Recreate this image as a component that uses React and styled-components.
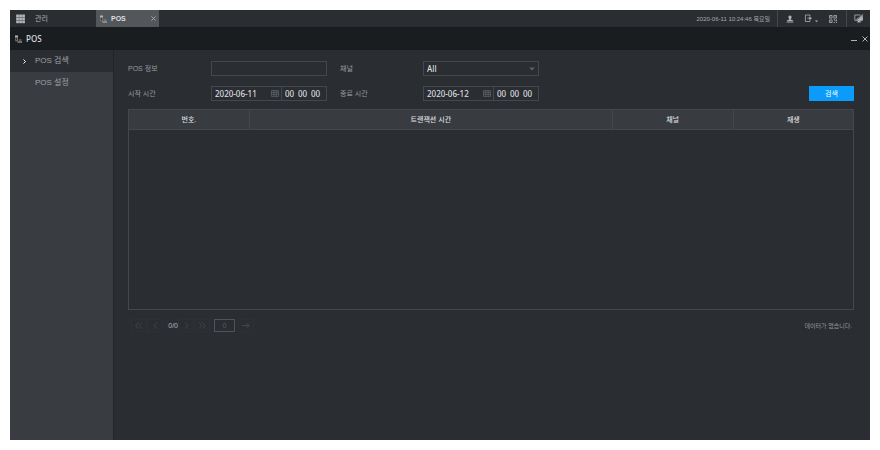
import { useState } from "react";
import styled, { createGlobalStyle } from "styled-components";

const colors = {
  bar: "#2a2e32",
  tab: "#53565b",
  title: "#1a1d1f",
  sidebar: "#393c40",
  content: "#2a2d31",
  border: "#44484c",
  header: "#383b3f",
  text: "#9a9c9e",
  light: "#dedfe0",
  faint: "#43474b",
  accent: "#0a9bfb",
};

const fonts = {
  body: `"Liberation Sans", "Noto Sans CJK KR", sans-serif`,
  field: `"Noto Sans", "Noto Sans CJK KR", sans-serif`,
};

const GlobalStyle = createGlobalStyle`
  * {
    box-sizing: border-box;
  }

  body {
    margin: 0;
    background-color: #ffffff;
    color: ${colors.text};
    font-family: ${fonts.body};
    font-size: 7px;
    line-height: 10px;
  }

  button,
  input,
  select {
    margin: 0;
    padding: 0;
    border: 0;
    background: none;
    color: inherit;
    font: inherit;
  }

  svg {
    display: block;
  }
`;

const Screen = styled.div`
  min-height: calc(100vh - 20px);
  margin: 10px;
  display: flex;
  flex-direction: column;
  background-color: ${colors.content};
`;

const TopBar = styled.header`
  height: 17px;
  display: flex;
  align-items: stretch;
  background-color: ${colors.bar};
`;

const MenuButton = styled.button`
  width: 86px;
  padding-left: 6px;
  display: flex;
  align-items: center;
  gap: 9px;
  color: #b4b6b8;
`;

const Tab = styled.div`
  width: 63px;
  padding: 0 3px 0 4px;
  display: flex;
  align-items: center;
  background-color: ${colors.tab};
  color: ${colors.light};
  font-weight: 600;
`;

const TabName = styled.span`
  flex: 1;
  padding-left: 4px;
`;

const IconButton = styled.button`
  width: ${({ $width }) => $width || 10}px;
  display: flex;
  align-items: center;
  justify-content: center;
  color: #b0b2b4;
`;

const Clock = styled.time`
  margin-left: auto;
  padding-right: 7px;
  align-self: center;
  color: #a8aaac;
  font-size: 6px;
`;

const Tools = styled.div`
  padding: 0 6px;
  display: flex;
  gap: 8px;
  border-left: 1px solid ${colors.border};
`;

const TitleBar = styled.div`
  height: 23px;
  padding: 0 2px 0 5px;
  display: flex;
  align-items: center;
  gap: 4px;
  background-color: ${colors.title};
`;

const Title = styled.h1`
  flex: 1;
  margin: 0;
  color: ${colors.light};
  font-family: ${fonts.field};
  font-size: 8px;
  font-weight: 500;
`;

const Body = styled.div`
  flex: 1;
  display: flex;
`;

const Sidebar = styled.nav`
  width: 104px;
  flex: none;
  background-color: ${colors.sidebar};
  border-right: 1px solid #222528;
`;

const SidebarItem = styled.button`
  width: 100%;
  height: 22px;
  padding-left: 12px;
  display: flex;
  align-items: center;
  background-color: ${({ $active }) => ($active ? colors.content : "transparent")};
  color: #a0a2a4;
  font-size: 8px;
`;

const Marker = styled.span`
  width: 13px;
  color: #ffffff;
`;

const Content = styled.main`
  flex: 1;
  min-width: 0;
  padding: 11px 16px 0 14px;
`;

const Search = styled.form`
  margin-bottom: 8px;
  display: flex;
  flex-direction: column;
  gap: 10px;
`;

const SearchRow = styled.div`
  display: flex;
  align-items: center;
  gap: 13px;
`;

const Field = styled.div`
  display: flex;
  align-items: center;
`;

const Label = styled.label`
  width: 83px;
`;

const Control = styled.div`
  width: 116px;
  height: 15px;
  display: flex;
  align-items: center;
  border: 1px solid ${colors.border};
  color: ${colors.light};
  font-family: ${fonts.field};
  font-size: 8px;
  font-weight: 500;
`;

const TextInput = styled.input`
  width: 100%;
  padding: 0 3px;
`;

const Select = styled.select`
  flex: 1;
  padding-left: 3px;
  appearance: none;
`;

const Arrow = styled.span`
  padding-right: 3px;
  color: #5d6063;
`;

const DateInput = styled.input`
  width: 59px;
  padding-left: 3px;
`;

const TimeGroup = styled.div`
  height: 100%;
  margin-left: 2px;
  padding-left: 3px;
  flex: 1;
  display: flex;
  align-items: center;
  border-left: 1px solid ${colors.border};
`;

const TimeInput = styled.input`
  width: 13px;
  min-width: 0;
`;

const SearchButton = styled.button`
  width: 45px;
  height: 15px;
  margin-left: auto;
  background-color: ${colors.accent};
  color: #ffffff;
`;

const Table = styled.table`
  width: 100%;
  table-layout: fixed;
  border-collapse: collapse;
  border: 1px solid ${colors.border};
`;

const HeadCell = styled.th`
  width: ${({ $width }) => $width};
  height: 20px;
  padding: 0;
  border: 1px solid ${colors.border};
  background-color: ${colors.header};
  color: ${colors.light};
  font-weight: 500;
`;

const EmptyCell = styled.td`
  height: 180px;
  padding: 0;
`;

const Footer = styled.div`
  margin-top: 9px;
  padding: 0 2px 0 3px;
  display: flex;
  align-items: center;
`;

const PageButton = styled.button`
  width: 16px;
  height: 13px;
  display: flex;
  align-items: center;
  justify-content: center;
  border: 1px solid #2d3034;
  color: ${colors.faint};
`;

const PageCount = styled.span`
  width: 15px;
  text-align: right;
  color: #b4b6b8;
`;

const PageInput = styled.input`
  width: 21px;
  height: 13px;
  margin: 0 3px 0 4px;
  border: 1px solid #505458;
  color: #5a5d60;
  text-align: center;
`;

const Message = styled.span`
  margin-left: auto;
  font-size: 6px;
`;

const GridIcon = () => (
  <svg width="10" height="10" viewBox="0 0 10 10" fill="currentColor">
    {[0, 3, 6].map((y) => [0, 3, 6].map((x) => <rect key={`${x}-${y}`} x={x + 0.2} y={y + 0.5} width="2.7" height="2.7" />))}
  </svg>
);

const PosIcon = () => (
  <svg width="7" height="8" viewBox="0 0 7 8">
    <path d="M0 .5h3v2H0z" fill="#b5b7b2" />
    <path d="M.3 2.5h2.6v3.8H.3z" fill="#777b76" />
    <path d="M1 3.2h1v2H1z" fill="#2a2d2b" />
    <path d="M3.8 4.5h2.7v1H3.8z" fill="#878c85" />
    <path d="M2.6 6.5H7v1H2.6z" fill="#c0c2bd" />
  </svg>
);

const CloseIcon = ({ size = 5 }) => (
  <svg width={size} height={size} viewBox="0 0 6 6" fill="none" stroke="currentColor">
    <path d="M0.5 0.5l5 5M5.5 0.5l-5 5" />
  </svg>
);

const UserIcon = () => (
  <svg width="8" height="8" viewBox="0 0 8 8" fill="currentColor">
    <path d="M4 0.5a1.6 1.6 0 0 1 1.6 1.7c0 .8-.4 1.5-.9 1.9v.5l2.4.9v.8H.9v-.8l2.4-.9v-.5c-.5-.4-.9-1.1-.9-1.9A1.6 1.6 0 0 1 4 .5zM.6 6.8h6.8v.8H.6z" />
  </svg>
);

const ExitIcon = () => (
  <svg width="14" height="9" viewBox="0 0 14 9" fill="none" stroke="currentColor" strokeWidth="0.8">
    <path d="M6 2.2V1H1.4v6.5H6V6.3M3.4 4.2h3" />
    <path d="M5.4 2.2l2.5 2-2.5 2z" fill="currentColor" stroke="none" />
    <path d="M11 6.4h3l-1.5 1.8z" fill="currentColor" stroke="none" />
  </svg>
);

const QrIcon = () => (
  <svg width="8" height="8" viewBox="0 0 8 8" fill="none" stroke="currentColor" strokeWidth="0.8">
    <path d="M.5 .5h2.6v2.6H.5zM4.9 .5h2.6v2.6H4.9zM.5 4.9h2.6v2.6H.5zM4.6 4.6h1.2v1.2M7.5 4.3v1.8H6.3M4.6 7.5h1.2M7.5 7v1" />
    <path d="M1.4 1.8h.8M5.8 1.8h.8M1.4 6.2h.8" />
  </svg>
);

const ScreenIcon = () => (
  <svg width="10" height="9" viewBox="0 0 10 9">
    <path d="M6.5 1H.8v5.4h7.6V4M3 8h4.2" fill="none" stroke="currentColor" strokeWidth="0.8" />
    <path d="M2.6 6.2L8.8 1v5.2zM4 6.4h2.2V8H4z" fill="currentColor" />
    <path d="M2.2 5.6L9.2 .3" stroke="currentColor" strokeWidth="0.7" />
  </svg>
);

const CalendarIcon = () => (
  <svg width="8" height="7" viewBox="0 0 8 7" fill="none" stroke="#66696c" strokeWidth="0.7">
    <path d="M.5 .6h7v5.8h-7zM.5 2.3h7M.5 4.3h7M2.8 .6v5.8M5.2 .6v5.8" />
  </svg>
);

const LineIcon = ({ width, d }) => (
  <svg width={width} height="7" viewBox={`0 0 ${width} 7`} fill="none" stroke="currentColor">
    <path d={d} />
  </svg>
);

const menu = ["POS 검색", "POS 설정"];

const columns = [
  { name: "번호.", width: "16.7%" },
  { name: "트랜잭션 시간", width: "50%" },
  { name: "채널", width: "16.7%" },
  { name: "재생", width: "16.6%" },
];

const DateTime = ({ id, label, date }) => (
  <Field>
    <Label htmlFor={id}>{label}</Label>
    <Control>
      <DateInput id={id} defaultValue={date} />
      <CalendarIcon />
      <TimeGroup>
        {["시", "분", "초"].map((unit) => (
          <TimeInput key={unit} aria-label={`${label} ${unit}`} defaultValue="00" />
        ))}
      </TimeGroup>
    </Control>
  </Field>
);

const App = () => {
  const [active, setActive] = useState(0);

  return (
    <>
      <GlobalStyle />

      <Screen>
        <TopBar>
          <MenuButton>
            <GridIcon />
            관리
          </MenuButton>
          <Tab>
            <PosIcon />
            <TabName>POS</TabName>
            <IconButton $width={6} aria-label="탭 닫기">
              <CloseIcon />
            </IconButton>
          </Tab>
          <Clock>2020-06-11 10:24:46 목요일</Clock>
          <Tools>
            <IconButton $width={12} aria-label="사용자">
              <UserIcon />
            </IconButton>
            <IconButton $width={14} aria-label="로그아웃">
              <ExitIcon />
            </IconButton>
            <IconButton $width={14} aria-label="QR 코드">
              <QrIcon />
            </IconButton>
          </Tools>
          <Tools>
            <IconButton $width={11} aria-label="화면">
              <ScreenIcon />
            </IconButton>
          </Tools>
        </TopBar>

        <TitleBar>
          <PosIcon />
          <Title>POS</Title>
          <IconButton $width={6} aria-label="최소화">
            <LineIcon width={6} d="M0 5.5h6" />
          </IconButton>
          <IconButton $width={7} aria-label="닫기">
            <CloseIcon size={6} />
          </IconButton>
        </TitleBar>

        <Body>
          <Sidebar>
            {menu.map((item, index) => (
              <SidebarItem key={item} $active={index === active} onClick={() => setActive(index)}>
                <Marker>{index === active && <LineIcon width={5} d="M1.5 1.5l2 2-2 2" />}</Marker>
                {item}
              </SidebarItem>
            ))}
          </Sidebar>

          <Content>
            <Search onSubmit={(event) => event.preventDefault()}>
              <SearchRow>
                <Field>
                  <Label htmlFor="info">POS 정보</Label>
                  <Control>
                    <TextInput id="info" />
                  </Control>
                </Field>
                <Field>
                  <Label htmlFor="channel">채널</Label>
                  <Control>
                    <Select id="channel">
                      <option>All</option>
                    </Select>
                    <Arrow>
                      <svg width="6" height="4" viewBox="0 0 6 4" fill="currentColor">
                        <path d="M0 .5h6L3 3.5z" />
                      </svg>
                    </Arrow>
                  </Control>
                </Field>
              </SearchRow>
              <SearchRow>
                <DateTime id="start" label="시작 시간" date="2020-06-11" />
                <DateTime id="end" label="종료 시간" date="2020-06-12" />
                <SearchButton type="submit">검색</SearchButton>
              </SearchRow>
            </Search>

            <Table>
              <thead>
                <tr>
                  {columns.map((column) => (
                    <HeadCell key={column.name} $width={column.width}>
                      {column.name}
                    </HeadCell>
                  ))}
                </tr>
              </thead>
              <tbody>
                <tr>
                  <EmptyCell colSpan={columns.length} />
                </tr>
              </tbody>
            </Table>

            <Footer>
              <PageButton aria-label="처음">
                <LineIcon width={8} d="M3.5 .5l-3 3 3 3M7 .5l-3 3 3 3" />
              </PageButton>
              <PageButton aria-label="이전">
                <LineIcon width={5} d="M4 .5l-3 3 3 3" />
              </PageButton>
              <PageCount>0/0</PageCount>
              <PageButton aria-label="다음">
                <LineIcon width={5} d="M1 .5l3 3-3 3" />
              </PageButton>
              <PageButton aria-label="마지막">
                <LineIcon width={8} d="M1 .5l3 3-3 3M4.5 .5l3 3-3 3" />
              </PageButton>
              <PageInput aria-label="페이지" defaultValue="0" />
              <PageButton aria-label="이동">
                <LineIcon width={8} d="M0 3.5h7M4.5 1l2.5 2.5-2.5 2.5" />
              </PageButton>
              <Message>데이터가 없습니다.</Message>
            </Footer>
          </Content>
        </Body>
      </Screen>
    </>
  );
};

export default App;
